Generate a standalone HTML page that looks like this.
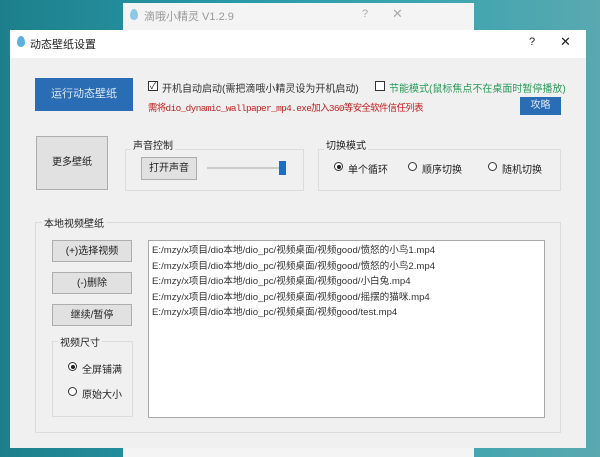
<!DOCTYPE html><html><head><meta charset="utf-8"><style>
body{margin:0;width:600px;height:457px;overflow:hidden;position:relative;background:linear-gradient(90deg,#1d7f8c 0%,#2a9aa8 40%,#3aa5b0 70%,#5aa8b0 100%);font-family:"Liberation Sans","Noto Sans CJK SC",sans-serif;font-size:10px;color:#222}
div{position:absolute;box-sizing:border-box}
.btn{background:#e1e1e1;border:1px solid #adadad;text-align:center}
.grp{border:1px solid #dcdcdc}
.lbl{background:#f0f0f0;padding:0 2px}
.rad{width:9px;height:9px;border:1px solid #333;border-radius:50%;background:#fff}
.rad.on::after{content:"";position:absolute;left:1.5px;top:1.5px;width:4px;height:4px;border-radius:50%;background:#222}
</style></head><body>
<div style="left:123px;top:3px;width:351px;height:454px;background:#f4f4f4"></div>
<div style="left:130px;top:9px;width:8px;height:11px;background:#8cc8e8;border-radius:50% 50% 50% 50%/60% 60% 40% 40%"></div>
<div style="left:144px;top:8px;color:#999;font-size:11px">滴哦小精灵 V1.2.9</div>
<div style="left:362px;top:8px;color:#aaa;font-size:11px">?</div>
<div style="left:392px;top:6px;color:#aaa;font-size:13px">✕</div>
<div style="left:10px;top:30px;width:576px;height:418px;background:#f0f0f0"></div>
<div style="left:10px;top:30px;width:576px;height:28px;background:#fff"></div>
<div style="left:17px;top:36px;width:8px;height:11px;background:#5ab0e0;border-radius:50% 50% 50% 50%/60% 60% 40% 40%"></div>
<div style="left:30px;top:36px;font-size:11px">动态壁纸设置</div>
<div style="left:529px;top:36px;font-size:11px">?</div>
<div style="left:560px;top:34px;font-size:13px">✕</div>
<div style="left:35px;top:78px;width:98px;height:33px;background:#2b6db5;color:#dbe8f5;text-align:center;line-height:33px;font-size:11px">运行动态壁纸</div>
<div style="left:148px;top:81px;width:10px;height:10px;border:1px solid #333;background:#fff;font-size:9px;line-height:8px;text-align:center">✓</div>
<div style="left:162px;top:80px;color:#333">开机自动启动(需把滴哦小精灵设为开机启动)</div>
<div style="left:375px;top:81px;width:10px;height:10px;border:1px solid #333;background:#fff"></div>
<div style="left:389px;top:80px;color:#2a9a5a">节能模式(鼠标焦点不在桌面时暂停播放)</div>
<div style="left:148px;top:100px;color:#c02020;font-family:'Liberation Mono','Noto Sans CJK SC',monospace;font-size:9.4px;letter-spacing:-0.6px">需将dio_dynamic_wallpaper_mp4.exe加入360等安全软件信任列表</div>
<div style="left:520px;top:97px;width:41px;height:18px;background:#2b6db5;color:#dbe8f5;text-align:center;line-height:18px">攻略</div>
<div class="btn" style="left:36px;top:136px;width:72px;height:54px;line-height:52px">更多壁纸</div>
<div class="grp" style="left:125px;top:149px;width:179px;height:42px"></div>
<div class="lbl" style="left:131px;top:137px">声音控制</div>
<div class="btn" style="left:141px;top:157px;width:56px;height:23px;line-height:22px">打开声音</div>
<div style="left:207px;top:167px;width:76px;height:2px;background:#ccc"></div>
<div style="left:279px;top:161px;width:7px;height:14px;background:#1b6ec2"></div>
<div class="grp" style="left:318px;top:149px;width:243px;height:42px"></div>
<div class="lbl" style="left:324px;top:137px">切换模式</div>
<div class="rad on" style="left:334px;top:162px"></div><div style="left:348px;top:161px">单个循环</div>
<div class="rad" style="left:408px;top:162px"></div><div style="left:422px;top:161px">顺序切换</div>
<div class="rad" style="left:488px;top:162px"></div><div style="left:502px;top:161px">随机切换</div>
<div class="grp" style="left:35px;top:222px;width:526px;height:211px"></div>
<div class="lbl" style="left:42px;top:215px">本地视频壁纸</div>
<div class="btn" style="left:52px;top:240px;width:80px;height:22px;line-height:22px">(+)选择视频</div>
<div class="btn" style="left:52px;top:272px;width:80px;height:22px;line-height:22px">(-)删除</div>
<div class="btn" style="left:52px;top:304px;width:80px;height:22px;line-height:22px">继续/暂停</div>
<div class="grp" style="left:52px;top:341px;width:81px;height:76px"></div>
<div class="lbl" style="left:58px;top:334px">视频尺寸</div>
<div class="rad on" style="left:68px;top:362px"></div><div style="left:82px;top:361px">全屏铺满</div>
<div class="rad" style="left:68px;top:387px"></div><div style="left:82px;top:386px">原始大小</div>
<div style="left:148px;top:240px;width:397px;height:178px;background:#fff;border:1px solid #a8a8a8;padding:2px 3px;line-height:15.6px;color:#333;font-size:9.6px">
E:/mzy/x项目/dio本地/dio_pc/视频桌面/视频good/愤怒的小鸟1.mp4<br>E:/mzy/x项目/dio本地/dio_pc/视频桌面/视频good/愤怒的小鸟2.mp4<br>E:/mzy/x项目/dio本地/dio_pc/视频桌面/视频good/小白兔.mp4<br>E:/mzy/x项目/dio本地/dio_pc/视频桌面/视频good/摇摆的猫咪.mp4<br>E:/mzy/x项目/dio本地/dio_pc/视频桌面/视频good/test.mp4</div>
</body></html>
